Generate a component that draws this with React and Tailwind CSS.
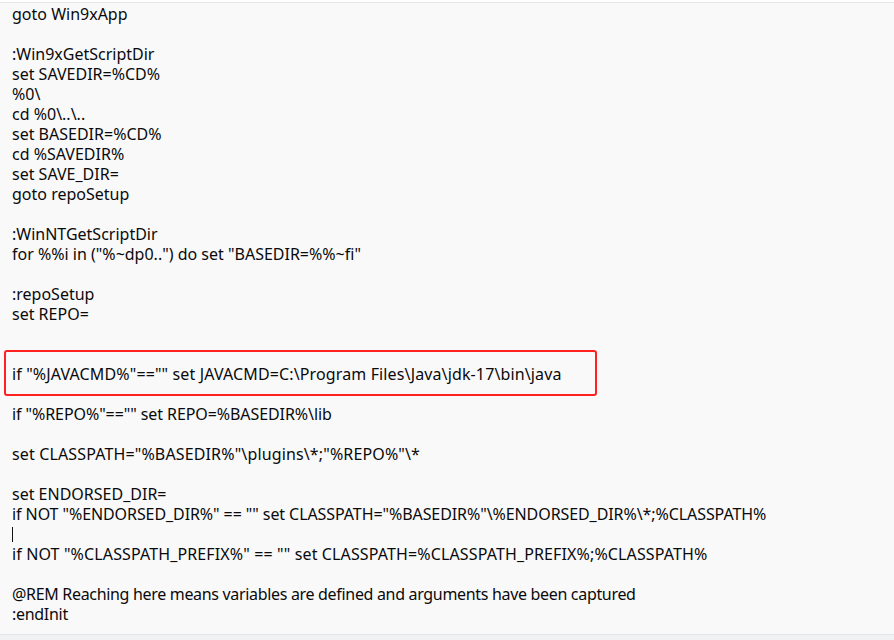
import React from 'react';

// [text, tracking class] — a few lines in the shot render a hair wider or narrower
const lines = [
  ['goto Win9xApp', ''],
  ['', ''],
  [':Win9xGetScriptDir', ''],
  ['set SAVEDIR=%CD%', ''],
  ['%0\\', ''],
  ['cd %0\\..\\..', ''],
  ['set BASEDIR=%CD%', ''],
  ['cd %SAVEDIR%', ''],
  ['set SAVE_DIR=', ''],
  ['goto repoSetup', ''],
  ['', ''],
  [':WinNTGetScriptDir', ''],
  ['for %%i in ("%~dp0..") do set "BASEDIR=%%~fi"', ''],
  ['', ''],
  [':repoSetup', ''],
  ['set REPO=', ''],
  ['', ''],
  ['', ''],
  ['if "%JAVACMD%"=="" set JAVACMD=C:\\Program Files\\Java\\jdk-17\\bin\\java', 'tracking-[0.13px]'],
  ['', ''],
  ['if "%REPO%"=="" set REPO=%BASEDIR%\\lib', 'tracking-[-0.08px]'],
  ['', ''],
  ['set CLASSPATH="%BASEDIR%"\\plugins\\*;"%REPO%"\\*', 'tracking-[0.14px]'],
  ['', ''],
  ['set ENDORSED_DIR=', ''],
  ['if NOT "%ENDORSED_DIR%" == "" set CLASSPATH="%BASEDIR%"\\%ENDORSED_DIR%\\*;%CLASSPATH%', 'tracking-[-0.08px]'],
  ['', ''],
  ['if NOT "%CLASSPATH_PREFIX%" == "" set CLASSPATH=%CLASSPATH_PREFIX%;%CLASSPATH%', 'tracking-[0.13px]'],
  ['', ''],
  ['@REM Reaching here means variables are defined and arguments have been captured', 'tracking-[-0.32px]'],
  [':endInit', 'tracking-[-0.3px]'],
];

const App = () => {
  return (
    <div className="w-[894px] h-[640px] bg-[#f9f9fa] overflow-hidden flex flex-col" style={{ fontFamily: '"Noto Sans", "Open Sans", sans-serif' }}>
      <div className="h-[2px] bg-white" />
      <div className="flex-1 border-t border-[#e4e6e9] pt-px pl-3 text-[16px] leading-[20px] text-[#0a0a0a]">
        {lines.map(([ln, tr], idx) => {
          if (idx === 18) {
            return (
              <div key={idx} className={`relative whitespace-pre h-5 ${tr}`}>
                {ln}
                <div className="absolute left-[-8px] top-[-14px] w-[593px] h-[46px] border-2 border-[#ff2020] rounded-[3px]" />
              </div>
            );
          }
          if (idx === 26) {
            return (
              <div key={idx} className="h-5 flex items-center">
                <div className="w-px h-[15px] bg-[#111]" />
              </div>
            );
          }
          return (
            <div key={idx} className={`whitespace-pre h-5 ${tr}`}>{ln}</div>
          );
        })}
      </div>
      <div className="h-[6px] border-t border-[#e4e6e9] bg-[#f1f2f4]" />
    </div>
  );
};

export default App;
